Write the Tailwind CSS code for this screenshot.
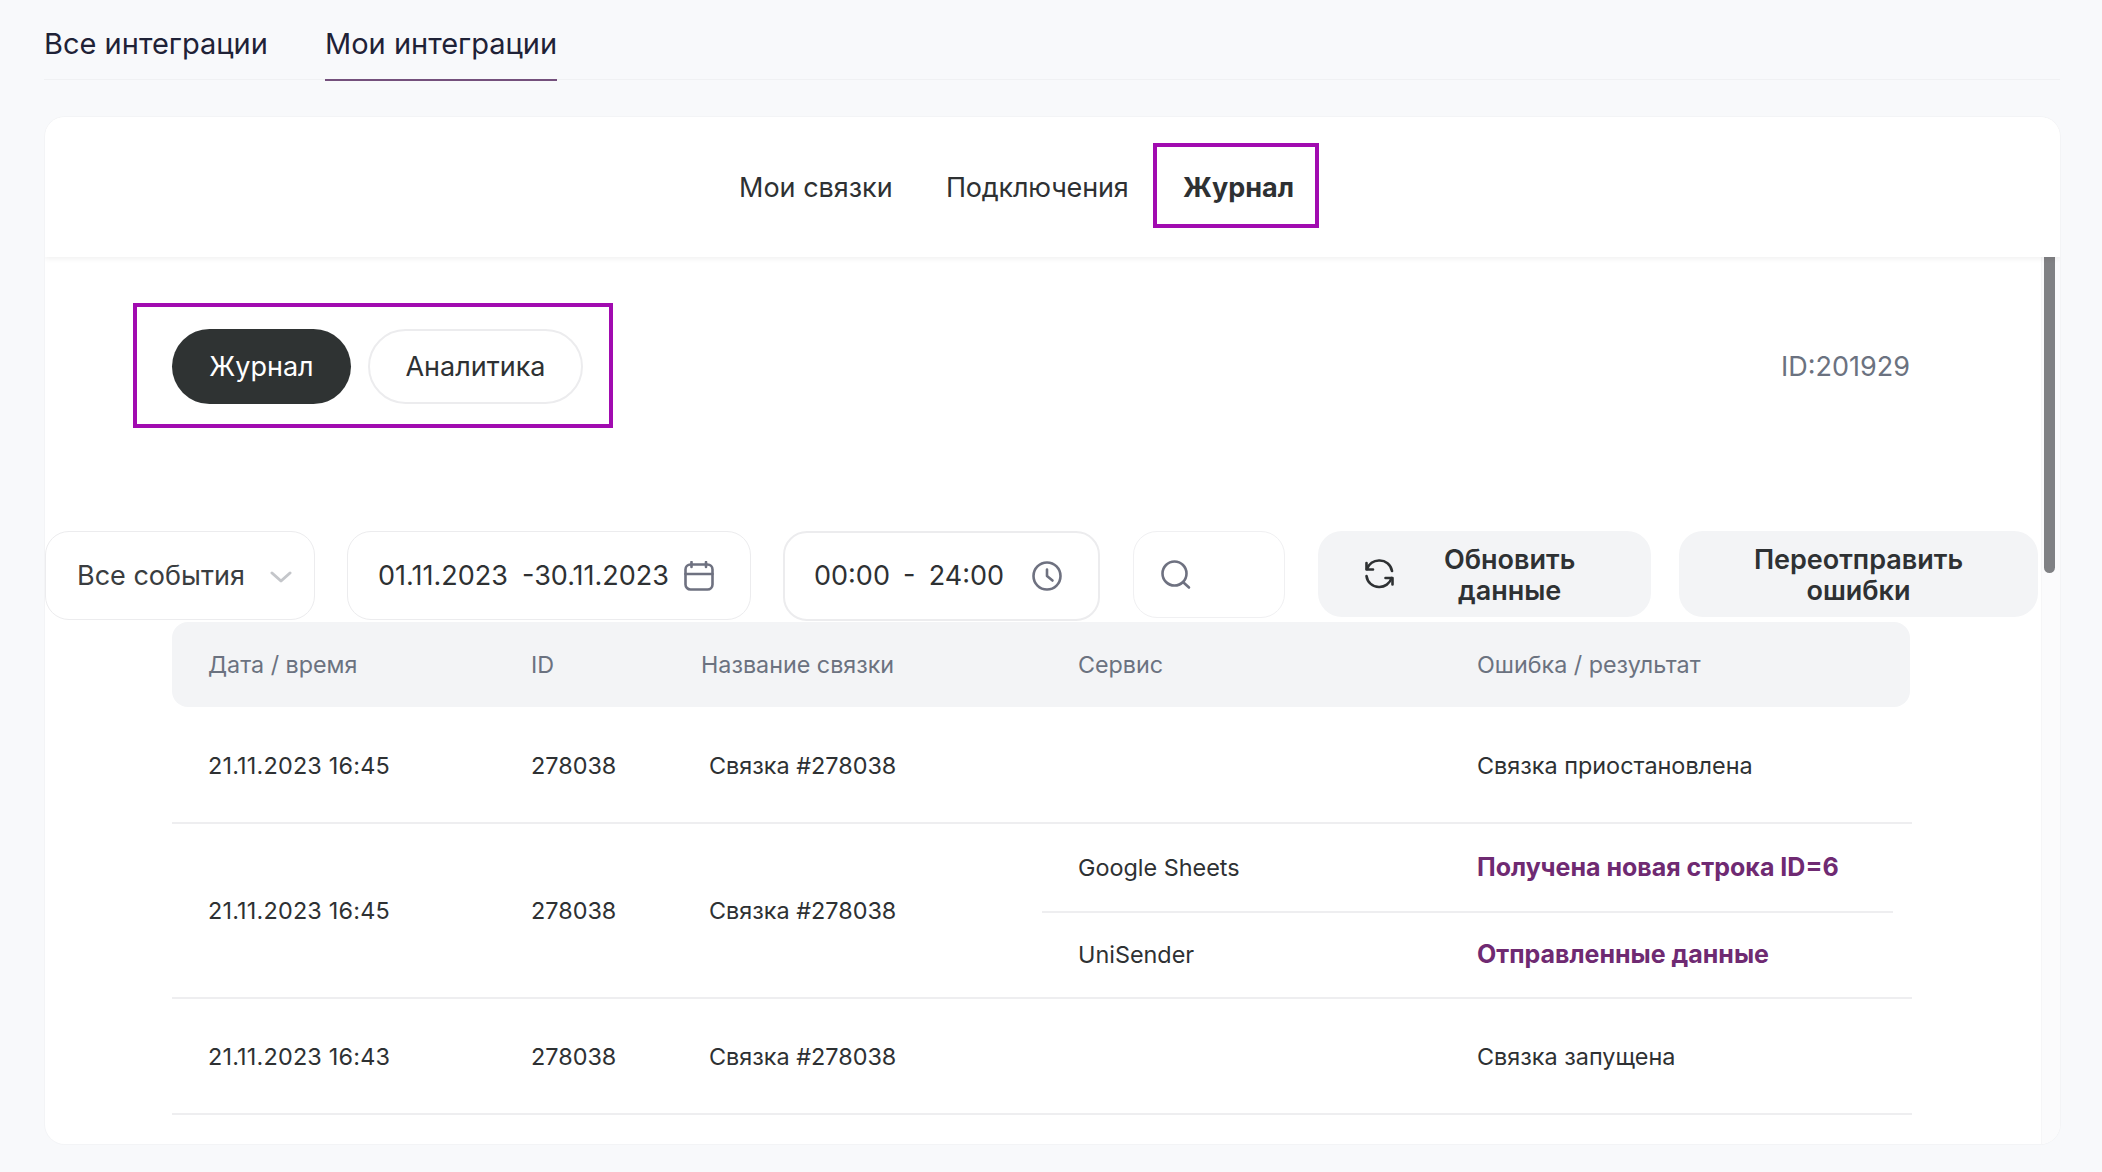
<!DOCTYPE html>
<html lang="ru">
<head>
  <meta charset="UTF-8" />
  <title>Журнал</title>
  <script src="https://cdn.jsdelivr.net/npm/@tailwindcss/browser@4"></script>
</head>
<body class="bg-[#f8f9fb] h-[1172px] overflow-hidden font-['Inter',sans-serif] text-[#2e3133]">

  <!-- Top tabs -->
  <div class="ml-[44px] mr-[42px] h-[80px] border-b border-[#f0f1f3] flex items-start text-[#1f2237] text-[29px] leading-[88px]">
    <div class="w-[281px]">Все интеграции</div>
    <div class="h-[81px] border-b-2 border-[#74507c]">Мои интеграции</div>
  </div>

  <!-- Card -->
  <div class="relative mt-[37px] ml-[45px] mr-[42px] h-[1027px] bg-white ring-1 ring-[#f3f4f6] rounded-[20px] overflow-hidden">

    <!-- Card nav -->
    <div class="relative z-10 h-[140px] flex items-center bg-white pl-[694px] text-[27px] shadow-[0_2px_5px_rgba(0,0,0,0.06)]">
      <div class="w-[207px] pt-[2px]">Мои связки</div>
      <div class="w-[207px] pt-[2px] tracking-[-0.2px]">Подключения</div>
      <div class="-mt-[3px] pt-[5px] pl-[5px] w-[166px] h-[85px] border-4 border-[#a10bb0] flex items-center justify-center font-bold">Журнал</div>
    </div>

    <!-- Scrollbar -->
    <div class="absolute top-[140px] bottom-0 right-0 w-[19px] bg-[#fbfbfc] border-l border-[#f6f6f7]">
      <div class="ml-[2px] w-[11px] h-[316px] bg-[#808184] rounded-b-[6px]"></div>
    </div>

    <!-- Switch and ID -->
    <div class="mt-[46px] flex items-center justify-between pl-[88px] pr-[150px]">
      <div class="w-[480px] h-[125px] pt-[2px] border-4 border-[#a10bb0] flex items-center gap-[17px] pl-[35px] text-[27px]">
        <div class="w-[179px] h-[75px] pt-[2px] rounded-full bg-[#2f3333] text-white flex items-center justify-center">Журнал</div>
        <div class="w-[215px] h-[75px] pt-[2px] rounded-full border-2 border-[#ececee] flex items-center justify-center">Аналитика</div>
      </div>
      <div class="pt-[4px] text-[27px] text-[#6b7280]">ID:201929</div>
    </div>

    <!-- Filters -->
    <div class="mt-[103px] h-[91px] flex items-start text-[27px]">
      <div class="w-[270px] h-[89px] pt-[2px] border border-[#ececee] rounded-[24px] flex items-center justify-between pl-[31px] pr-[22px] text-[#3a3d40]">
        <span>Все события</span>
        <svg class="w-[22px] h-[12px]" viewBox="0 0 22 12" fill="none" stroke="#c4c6ca" stroke-width="3" stroke-linecap="round" stroke-linejoin="round"><path d="M2 2l9 8 9-8"/></svg>
      </div>
      <div class="ml-[32px] w-[404px] h-[89px] border border-[#ececee] rounded-[24px] flex items-center justify-between pl-[30px] pr-[36px]">
        <span class="pt-[2px] whitespace-pre [word-spacing:-0.500px]">01.11.2023  -30.11.2023</span>
        <svg class="w-[30px] h-[30px]" viewBox="0 0 30 30" fill="none" stroke="#6e7180" stroke-width="2.6" stroke-linecap="round" stroke-linejoin="round"><rect x="1.500" y="3.500" width="27" height="25" rx="5"/><path d="M1.500 13h27M7.500 1v5M22 1v5"/></svg>
      </div>
      <div class="ml-[32px] w-[317px] h-[90px] border-2 border-[#ececee] rounded-[24px] flex items-center justify-between pl-[29px] pr-[36px]">
        <span class="pt-[1px] whitespace-pre [word-spacing:-1px]">00:00  -  24:00</span>
        <svg class="w-[30px] h-[30px]" viewBox="0 0 30 30" fill="none" stroke="#6e7180" stroke-width="2.6" stroke-linecap="round" stroke-linejoin="round"><circle cx="15" cy="15" r="13.500"/><path d="M15 8.500v6.500l5.500 4.500"/></svg>
      </div>
      <div class="ml-[33px] w-[152px] h-[87px] border border-[#f0f0f2] rounded-[24px] flex items-center pl-[27px]">
        <svg class="w-[30px] h-[30px]" viewBox="0 0 30 30" fill="none" stroke="#6e7180" stroke-width="2.6" stroke-linecap="round" stroke-linejoin="round"><circle cx="13.500" cy="13.500" r="12"/><path d="M22.500 22.500l5.500 5"/></svg>
      </div>
      <div class="ml-[33px] w-[333px] h-[86px] bg-[#f3f4f6] rounded-[24px] flex items-center pl-[47px] font-semibold text-[27px] leading-[31px]">
        <svg class="w-[29px] h-[30px] shrink-0" viewBox="0 0 29 30" fill="none" stroke="#2e3133" stroke-width="2.600" stroke-linecap="round" stroke-linejoin="round"><path d="M2 10A12.500 12.500 0 0 1 14 1.500A12.500 12.500 0 0 1 27 12"/><path d="M1.500 4V10.500H8"/><path d="M26.500 19A12.500 12.500 0 0 1 14 28A12.500 12.500 0 0 1 1.500 17"/><path d="M27.500 25.500V19H20.500"/></svg>
        <div class="ml-[50px] pt-[2px] text-center">Обновить<br>данные</div>
      </div>
      <div class="ml-[28px] w-[359px] h-[86px] pt-[2px] bg-[#f3f4f6] rounded-[24px] flex items-center justify-center text-center font-semibold text-[27px] leading-[31px]">
        Переотправить<br>ошибки
      </div>
    </div>

    <!-- Table -->
    <div class="ml-[127px] w-[1738px] text-[23.400px]">
      <div class="h-[85px] pt-[1px] bg-[#f3f4f6] rounded-[16px] flex items-center pl-[36px] text-[#6b7280] text-[23.300px]">
        <div class="w-[323px]">Дата / время</div>
        <div class="w-[170px]">ID</div>
        <div class="w-[377px]">Название связки</div>
        <div class="w-[399px]">Сервис</div>
        <div>Ошибка / результат</div>
      </div>

      <div class="h-[117px] -mr-[2px] pt-[2px] border-b-2 border-[#eeeef0] flex items-center pl-[36px]">
        <div class="w-[323px] tracking-[0.2px]">21.11.2023 16:45</div>
        <div class="w-[178px]">278038</div>
        <div class="w-[768px]">Связка #278038</div>
        <div>Связка приостановлена</div>
      </div>

      <div class="h-[175px] -mr-[2px] border-b-2 border-[#eeeef0] flex items-center pl-[36px]">
        <div class="w-[323px] tracking-[0.2px]">21.11.2023 16:45</div>
        <div class="w-[178px]">278038</div>
        <div class="w-[333px]">Связка #278038</div>
        <div class="w-[851px]">
          <div class="h-[89px] pt-[1px] border-b-2 border-[#eeeef0] flex items-center pl-[36px]">
            <div class="w-[399px]">Google Sheets</div>
            <div class="font-bold text-[25px] text-[#6f2a72]">Получена новая строка ID=6</div>
          </div>
          <div class="h-[84px] flex items-center pl-[36px]">
            <div class="w-[399px]">UniSender</div>
            <div class="font-bold text-[25px] text-[#6f2a72]">Отправленные данные</div>
          </div>
        </div>
      </div>

      <div class="h-[116px] -mr-[2px] pt-[1px] border-b-2 border-[#eeeef0] flex items-center pl-[36px]">
        <div class="w-[323px] tracking-[0.2px]">21.11.2023 16:43</div>
        <div class="w-[178px]">278038</div>
        <div class="w-[768px]">Связка #278038</div>
        <div>Связка запущена</div>
      </div>
    </div>
  </div>
</body>
</html>
